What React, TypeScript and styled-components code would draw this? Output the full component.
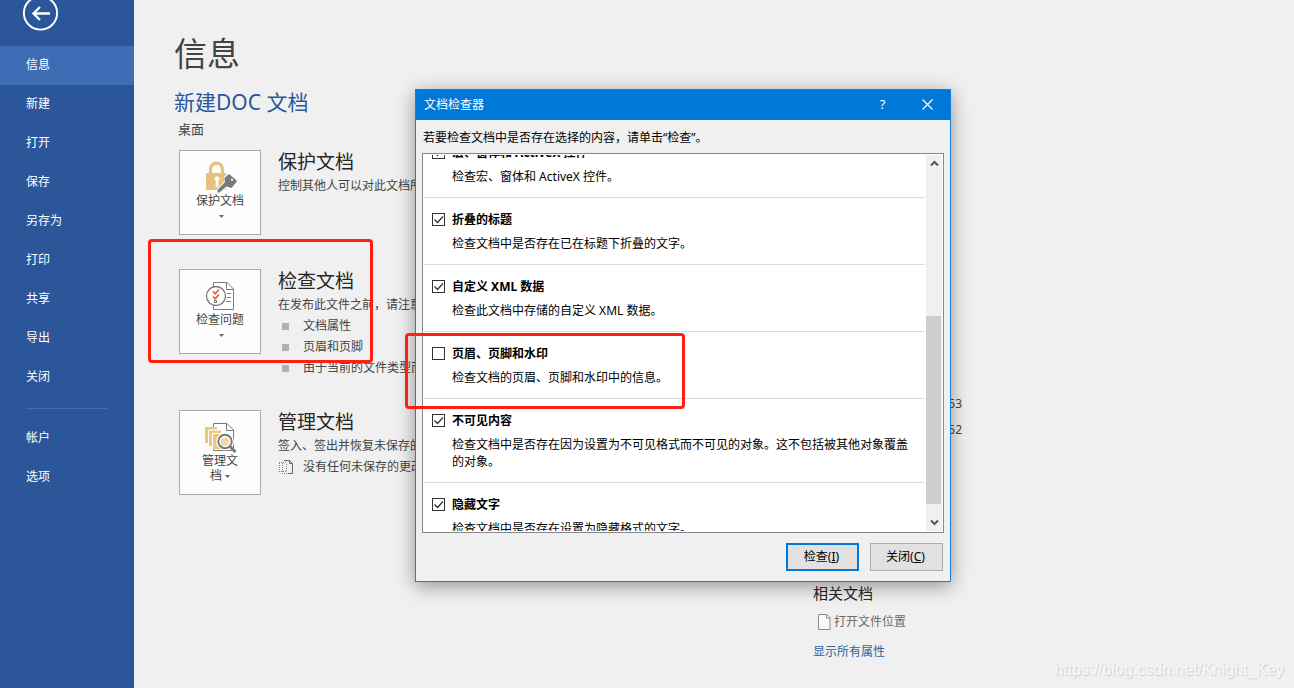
import React from 'react';
import styled, { createGlobalStyle } from 'styled-components';

const Global = createGlobalStyle`
  * { box-sizing: border-box; }
  body {
    margin: 0;
    background: #f0f0f0;
    font-family: "Noto Sans", "Noto Sans CJK SC", sans-serif;
    font-size: 12px;
    line-height: 17px;
    color: #444;
  }
  h1, h2, h3, p, ul { margin: 0; padding: 0; font-weight: 400; }
  ul { list-style: none; }
  button { font: inherit; color: inherit; padding: 0; }
`;

const Page = styled.div`
  position: relative;
  display: flex;
  min-height: 100vh;
  overflow: hidden;
`;

const Sidebar = styled.nav`
  flex: 0 0 134px;
  background: #2b579a;
  color: #fff;
`;

const BackButton = styled.button`
  display: block;
  width: 36px;
  height: 36px;
  margin: -5px 0 15px 23px;
  border: 0;
  background: none;
`;

const NavItem = styled.a<{ $active?: boolean }>`
  display: block;
  padding-left: 26px;
  line-height: 38px;
  height: 39px;
  color: #fff;
  text-decoration: none;
  background: ${(p) => (p.$active ? '#3e6db5' : 'transparent')};
`;

const NavRule = styled.hr`
  height: 1px;
  margin: 11px 26px 10px;
  border: 0;
  background: #3e6db5;
`;

const Main = styled.main`
  flex: 1;
  min-width: 0;
  display: grid;
  grid-template-columns: 639px 1fr;
  padding: 32px 0 0 40px;
`;

const Title = styled.h1`
  font-size: 33px;
  line-height: 44px;
`;

const DocName = styled.h2`
  margin-top: 12px;
  font-size: 21px;
  line-height: 28px;
  color: #2b579a;
`;

const Location = styled.p`
  margin: 4px 0 12px 4px;
  font-size: 13px;
  line-height: 18px;
`;

const Actions = styled.div`
  display: grid;
  gap: 34px;
  padding-left: 5px;
`;

const ActionRow = styled.section`
  display: flex;
  align-items: flex-start;
  gap: 17px;
`;

const Card = styled.button`
  display: flex;
  flex-direction: column;
  align-items: center;
  width: 82px;
  height: 85px;
  padding-top: 10px;
  border: 1px solid #ababab;
  background: #fdfdfd;
  line-height: 15px;
`;

const CardLabel = styled.span`
  width: 50px;
  text-align: center;
`;

const Caret = styled.svg`
  margin-left: 3px;
  vertical-align: 2px;
`;

const ActionTitle = styled.h3`
  font-size: 19px;
  line-height: 25px;
  color: #262626;
`;

const ActionText = styled.p`
  line-height: 22px;
`;

const Bullets = styled.ul`
  line-height: 20px;
`;

const Bullet = styled.li`
  display: flex;
  align-items: center;
  padding-left: 4px;
  & + & { margin-top: 1px; }
  &:last-child { margin-bottom: -2px; }
  &::before {
    content: "";
    width: 7px;
    height: 7px;
    margin-right: 14px;
    background: #b1b1b1;
  }
`;

const Unsaved = styled.p`
  display: flex;
  align-items: center;
  gap: 9px;
  line-height: 20px;
`;

const Info = styled.aside`
  padding-top: 331px;
`;

const InfoGroup = styled.section`
  & + & { margin-top: 16px; }
`;

const InfoTitle = styled.h3`
  margin-bottom: 4px;
  font-size: 15px;
  line-height: 24px;
  color: #262626;
`;

const InfoRow = styled.p`
  width: 149px;
  line-height: 26px;
  text-align: right;
`;

const PersonRow = styled(InfoRow)`
  width: 139px;
  color: #2b579a;
`;

const PeopleGroup = styled(InfoGroup)`
  padding-top: 26px;
`;

const FileLink = styled.a`
  display: flex;
  align-items: center;
  gap: 3px;
  padding-left: 5px;
  line-height: 26px;
  color: #6a6a6a;
  text-decoration: none;
`;

const AllLink = styled.a`
  display: block;
  margin-top: 4px;
  line-height: 26px;
  color: #2f649f;
  text-decoration: none;
`;

const Dialog = styled.div`
  position: absolute;
  left: 415px;
  top: 89px;
  width: 536px;
  border: 1px solid #1a7fd4;
  background: #f0f0f0;
  color: #000;
  box-shadow: 0 4px 18px rgba(0, 0, 0, 0.4);
`;

const TitleBar = styled.header`
  display: flex;
  align-items: center;
  height: 30px;
  padding: 0 0 2px 8px;
  background: #0078d7;
  color: #fff;
`;

const TitleText = styled.h2`
  flex: 1;
  font-size: 12px;
  line-height: 17px;
`;

const TitleButton = styled.button`
  display: flex;
  align-items: center;
  justify-content: center;
  width: 45px;
  height: 27px;
  border: 0;
  background: none;
  font-size: 13px;
`;

const Hint = styled.p`
  padding: 9px 7px 7px;
`;

const ListBox = styled.div`
  display: flex;
  height: 380px;
  margin: 0 6px;
  padding: 1px;
  border: 1px solid #828790;
  background: #fff;
`;

const Viewport = styled.div`
  flex: 1;
  overflow: hidden;
`;

const Options = styled.ul`
  margin: -24px 1px 0 0;
`;

const Option = styled.li`
  padding: 13px 12px 12px 8px;
  border-bottom: 1px solid #dcdcdc;
`;

const OptionLabel = styled.label`
  display: flex;
  align-items: center;
  gap: 7px;
  font-weight: 700;
`;

const OptionText = styled.p`
  margin: 7px 0 0 20px;
`;

const TickBox = styled.span`
  position: relative;
  display: flex;
  width: 13px;
  height: 13px;
  svg {
    position: absolute;
    inset: 0;
    pointer-events: none;
    visibility: hidden;
  }
  input:checked + svg { visibility: visible; }
`;

const Tick = styled.input`
  appearance: none;
  width: 13px;
  height: 13px;
  margin: 0;
  border: 1px solid #333;
  background: #fff;
`;

const ScrollBar = styled.div`
  display: flex;
  flex-direction: column;
  width: 16px;
  background: #f0f0f0;
`;

const ScrollButton = styled.button`
  display: flex;
  align-items: center;
  justify-content: center;
  height: 17px;
  border: 0;
  background: none;
`;

const ScrollTrack = styled.div`
  flex: 1;
  display: flex;
  flex-direction: column;
  justify-content: flex-end;
  padding-bottom: 10px;
`;

const ScrollThumb = styled.div`
  width: 15px;
  height: 188px;
  background: #cdcdcd;
`;

const Footer = styled.footer`
  display: flex;
  justify-content: flex-end;
  gap: 11px;
  padding: 10px 7px;
`;

const DialogButton = styled.button<{ $primary?: boolean }>`
  width: 73px;
  height: 28px;
  padding: 0 2px 2px 0;
  border: ${(p) => (p.$primary ? '2px solid #0078d7' : '1px solid #adadad')};
  background: #e1e1e1;
`;

const Highlight = styled.div<{ $x: number; $y: number; $w: number; $h: number }>`
  position: absolute;
  left: ${(p) => p.$x}px;
  top: ${(p) => p.$y}px;
  width: ${(p) => p.$w}px;
  height: ${(p) => p.$h}px;
  border: 3px solid #ff2015;
  border-radius: 4px;
  pointer-events: none;
`;

const Watermark = styled.span`
  position: absolute;
  right: 10px;
  bottom: 8px;
  font-family: "Liberation Sans", sans-serif;
  font-size: 16px;
  line-height: 20px;
  color: #f8f8f8;
  text-shadow: 1px 1px 1px #cccccc;
`;

const Down = () => (
  <Caret width="5" height="3" viewBox="0 0 5 3">
    <path d="M0 0h5L2.500 3z" fill="#666" />
  </Caret>
);

const LockIcon = () => (
  <svg width="36" height="32" viewBox="0 0 36 32">
    <path d="M8.500 13V8.200a5.700 5.700 0 0 1 12 0V13" fill="none" stroke="#e9c07c" strokeWidth="3.200" />
    <rect x="4" y="12" width="20.500" height="17" rx="1" fill="#e9c07c" />
    <path d="M15 15.200a2.500 2.500 0 0 1 1.300 4.600V26h-2.600v-6.200a2.500 2.500 0 0 1 1.300-4.600z" fill="#fff" />
    <path d="M26.500 12L36 20l-6 8-5-1.500-4.500 5H15v-3.500l7.500-8-.5-4z" fill="#fdfdfd" />
    <path d="M27 13l7.500 6.200v1.800L29.500 27l-5.500-1.500-2 2.500-1.500.2-.5 1.800-1.500.2-1 1.300H15.500V29l7.500-8-.5-4z" fill="#7a7a7a" />
    <circle cx="30" cy="18.800" r="1.100" fill="#fdfdfd" />
  </svg>
);

const InspectIcon = () => (
  <svg width="36" height="32" viewBox="0 0 36 32" fill="none" stroke="#7a7a7a">
    <path d="M11.500 2.500H25l6.500 6.500v20.500h-20z" fill="#fff" />
    <path d="M24.500 2.500V9.500H31.500M25 13.500h4M25 17.500h4M24 21.500h5" />
    <circle cx="14" cy="16" r="9.500" fill="#fff" strokeWidth="1.300" />
    <path d="M11 11.500l2.200 2.200L17 9.500M11 16.500l2.200 2.200L17 14.500" stroke="#e0603c" strokeWidth="1.700" />
    <rect x="12.500" y="20.500" width="2" height="2" />
  </svg>
);

const ManageIcon = () => (
  <svg width="36" height="32" viewBox="0 0 36 32" fill="none">
    <path d="M11.500 2.500H25l6.500 6.500v20.500h-20z" fill="#fff" stroke="#7a7a7a" />
    <path d="M24.500 2.500V9.500H31.500" stroke="#7a7a7a" />
    <path d="M3 6h12v3H6.500v13H3z" fill="#efc580" />
    <path d="M7 9.500h12v3h-8.500V25H7zM11 13h12v15H11z" fill="#efc580" />
    <path d="M6.500 22V9H17M10.500 25V12.500H21" stroke="#fff" />
    <circle cx="23" cy="20.500" r="7" fill="#fff" fillOpacity=".85" stroke="#fff" strokeWidth="4" />
    <path d="M27.500 25l6 6" stroke="#7a7a7a" strokeWidth="3" />
    <circle cx="23" cy="20.500" r="6.700" stroke="#7a7a7a" strokeWidth="2" />
    <path d="M19 18.500l5-2.500 3 3v4l-3 2h-5z" fill="#f3d6a5" />
  </svg>
);

const UnsavedIcon = () => (
  <svg width="16" height="16" viewBox="0 0 16 16" fill="none" stroke="#666">
    <path d="M6 1.500h5.500l3 3v10H11" />
    <path d="M11.500 1.500v3h3" />
    <path d="M4 14.500h7M4.500 4v10M1 3.500h8M1.500 4v9M1 12.500h8M8.500 5v8" stroke="#888" strokeDasharray="1 1" />
  </svg>
);

const FileIcon = () => (
  <svg width="13" height="16" viewBox="0 0 13 16" fill="none" stroke="#8a8a8a">
    <path d="M.5.500h8.500l3 3v12H.5z" fill="#f8f9fb" />
    <path d="M8.500.500v3.500H12" />
  </svg>
);

const navItems = ['信息', '新建', '打开', '保存', '另存为', '打印', '共享', '导出', '关闭'];

const options = [
  { name: '宏、窗体和 ActiveX 控件', text: '检查宏、窗体和 ActiveX 控件。', on: true },
  { name: '折叠的标题', text: '检查文档中是否存在已在标题下折叠的文字。', on: true },
  { name: '自定义 XML 数据', text: '检查此文档中存储的自定义 XML 数据。', on: true },
  { name: '页眉、页脚和水印', text: '检查文档的页眉、页脚和水印中的信息。', on: false },
  { name: '不可见内容', text: '检查文档中是否存在因为设置为不可见格式而不可见的对象。这不包括被其他对象覆盖的对象。', on: true },
  { name: '隐藏文字', text: '检查文档中是否存在设置为隐藏格式的文字。', on: true },
];

export default function App() {
  return (
    <Page>
      <Global />
      <Sidebar>
        <BackButton aria-label="返回">
          <svg width="36" height="36" viewBox="0 0 36 36" fill="none" stroke="#fff">
            <circle cx="17.500" cy="18" r="16.600" strokeWidth="1.900" />
            <path d="M27 18.500H11M17 12l-6.500 6.500L17 25" strokeWidth="2.400" />
          </svg>
        </BackButton>
        {navItems.map((n, i) => (
          <NavItem key={n} href="#" $active={i === 0}>{n}</NavItem>
        ))}
        <NavRule />
        <NavItem href="#">帐户</NavItem>
        <NavItem href="#">选项</NavItem>
      </Sidebar>

      <Main>
        <div>
          <Title>信息</Title>
          <DocName>新建DOC 文档</DocName>
          <Location>桌面</Location>
          <Actions>
            <ActionRow>
              <Card><LockIcon /><CardLabel>保护文档 <Down /></CardLabel></Card>
              <div>
                <ActionTitle>保护文档</ActionTitle>
                <ActionText>控制其他人可以对此文档所做的更改类型。</ActionText>
              </div>
            </ActionRow>
            <ActionRow>
              <Card><InspectIcon /><CardLabel>检查问题 <Down /></CardLabel></Card>
              <div>
                <ActionTitle>检查文档</ActionTitle>
                <ActionText>在发布此文件之前，请注意其是否包含:</ActionText>
                <Bullets>
                  <Bullet>文档属性</Bullet>
                  <Bullet>页眉和页脚</Bullet>
                  <Bullet>由于当前的文件类型而无法检查</Bullet>
                </Bullets>
              </div>
            </ActionRow>
            <ActionRow>
              <Card><ManageIcon /><CardLabel>管理文<br />档<Down /></CardLabel></Card>
              <div>
                <ActionTitle>管理文档</ActionTitle>
                <ActionText>签入、签出并恢复未保存的更改。</ActionText>
                <Unsaved><UnsavedIcon />没有任何未保存的更改。</Unsaved>
              </div>
            </ActionRow>
          </Actions>
        </div>

        <Info>
          <InfoGroup>
            <InfoTitle>相关日期</InfoTitle>
            <InfoRow>今天 9:53</InfoRow>
            <InfoRow>今天 9:52</InfoRow>
          </InfoGroup>
          <PeopleGroup>
            <InfoTitle>相关人员</InfoTitle>
            <PersonRow>添加作者</PersonRow>
            <PersonRow>作者</PersonRow>
          </PeopleGroup>
          <InfoGroup>
            <InfoTitle>相关文档</InfoTitle>
            <FileLink href="#"><FileIcon />打开文件位置</FileLink>
            <AllLink href="#">显示所有属性</AllLink>
          </InfoGroup>
        </Info>
      </Main>

      <Dialog role="dialog" aria-label="文档检查器">
        <TitleBar>
          <TitleText>文档检查器</TitleText>
          <TitleButton>?</TitleButton>
          <TitleButton aria-label="关闭">
            <svg width="11" height="11" viewBox="0 0 11 11" stroke="#fff" strokeWidth="1.200">
              <path d="M.5.500l10 10M10.500.500l-10 10" />
            </svg>
          </TitleButton>
        </TitleBar>
        <Hint>若要检查文档中是否存在选择的内容，请单击“检查”。</Hint>
        <ListBox>
          <Viewport>
            <Options>
              {options.map((o) => (
                <Option key={o.name}>
                  <OptionLabel>
                    <TickBox>
                      <Tick type="checkbox" defaultChecked={o.on} />
                      <svg width="13" height="13" viewBox="0 0 13 13" fill="none" stroke="#333" strokeWidth="1.300">
                        <path d="M2.500 6.500l3 3 5.500-6" />
                      </svg>
                    </TickBox>
                    {o.name}
                  </OptionLabel>
                  <OptionText>{o.text}</OptionText>
                </Option>
              ))}
            </Options>
          </Viewport>
          <ScrollBar>
            <ScrollButton aria-label="向上滚动">
              <svg width="9" height="7" viewBox="0 0 9 7" fill="none" stroke="#555" strokeWidth="2">
                <path d="M1 5.500L4.500 2 8 5.500" />
              </svg>
            </ScrollButton>
            <ScrollTrack><ScrollThumb /></ScrollTrack>
            <ScrollButton aria-label="向下滚动">
              <svg width="9" height="7" viewBox="0 0 9 7" fill="none" stroke="#555" strokeWidth="2">
                <path d="M1 1.500L4.500 5 8 1.500" />
              </svg>
            </ScrollButton>
          </ScrollBar>
        </ListBox>
        <Footer>
          <DialogButton $primary>检查(<u>I</u>)</DialogButton>
          <DialogButton>关闭(<u>C</u>)</DialogButton>
        </Footer>
      </Dialog>

      <Highlight $x={148} $y={239} $w={225} $h={124} />
      <Highlight $x={405} $y={333} $w={280} $h={76} />
      <Watermark>https://blog.csdn.net/Knight_Key</Watermark>
    </Page>
  );
}
